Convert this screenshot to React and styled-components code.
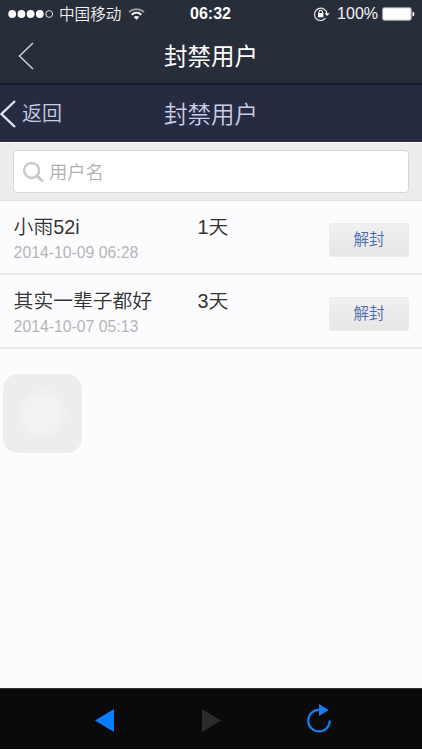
import React, {useState} from 'react';
import styled, {createGlobalStyle} from 'styled-components';

const GlobalStyle = createGlobalStyle`
    * { box-sizing: border-box; }
    body {
        margin: 0;background: #fff;
        font-family: "Liberation Sans", "Noto Sans CJK SC", sans-serif;
    }
`;

const Screen = styled.div`
    position: relative;display: flex;flex-direction: column;width: 422px;height: 749px;overflow: hidden;background: #fcfcfe;
`;

const StatusBar = styled.div`
    display: grid;grid-template-columns: 1fr auto 1fr;align-items: center;height: 28px;padding: 0 7px 0 8px;background: #282d3a;color: #f2f3f6;font-size: 16px;line-height: 28px;
    b{
        padding-right: 2px;color: #fff;
    }
`;

const Signal = styled.div`
    display: flex;align-items: center;height: 28px;
    span{
        margin: 0 7px 0 5px;padding-top: 1px;font-size: 15.6px;font-weight: 350;white-space: nowrap;
    }
`;

const Power = styled.div`
    display: flex;align-items: center;justify-content: flex-end;height: 28px;
    span{
        margin: 0 4px 0 6px;
    }
`;

const TitleBar = styled.header`
    display: grid;grid-template-columns: 1fr auto 1fr;align-items: center;
    height: ${({$sub}) => $sub ? '58px' : '57px'};
    background: ${({$sub}) => $sub ? '#272b41' : '#282d3a'};
    color: ${({$sub}) => $sub ? '#c9cee6' : '#fff'};
    border-bottom: ${({$sub}) => $sub ? '1px solid #fff' : '2px solid #141829'};
    h1{
        margin: 0;padding-top: 2px;font-size: 23.5px;line-height: 30px;
        font-weight: ${({$sub}) => $sub ? 350 : 400};
    }
`;

const BackLink = styled.a`
    display: flex;align-items: center;gap: 6px;font-size: 20px;font-weight: 350;line-height: 30px;cursor: pointer;
    padding-left: ${({$indent}) => $indent || 0}px;
`;

const SearchArea = styled.div`
    height: 58px;padding: 7px 13px 0;background: #ededef;border-bottom: 1px solid #e2e2e5;
`;

const SearchBox = styled.label`
    display: flex;align-items: center;width: 396px;height: 43px;padding-left: 9px;background: #fff;border: 1px solid #d6d6d8;border-radius: 4px;
    input{
        flex: 1;min-width: 0;height: 40px;margin-left: 4px;padding: 2px 0 0;border: 0;outline: 0;background: transparent;font-family: inherit;font-size: 18.3px;font-weight: 350;color: #333;
    }
    input::placeholder{
        color: #b0b0b0;opacity: 1;
    }
`;

const UserRow = styled.li`
    display: grid;grid-template-columns: 184px 1fr 80px;height: 74px;padding: 0 13px;border-bottom: 2px solid #e9e9ec;
`;

const UserList = styled.ul`
    flex: 1;margin: 0;padding: 0;list-style: none;
`;

const UserName = styled.div`
    padding: 12px 0 0 .6px;font-size: 19.8px;font-weight: 350;line-height: 28px;color: #333;white-space: nowrap;
    time{
        display: block;font-size: 15.8px;line-height: 23px;color: #b5b5b7;
    }
`;

const UnbanButton = styled.button`
    width: 80px;height: 34px;margin-top: 22px;padding: 0;border: 1px solid #ececef;border-radius: 2px;background: linear-gradient(#f0f0f1, #e7e7e8);color: #4c6bae;font-family: inherit;font-size: 15.5px;line-height: 28px;font-weight: 350;cursor: pointer;
`;

const AssistiveTouch = styled.div`
    position: absolute;left: 3px;top: 374px;width: 79px;height: 79px;border-radius: 15px;
    background: radial-gradient(circle at 50% 50%, #f4f4f5 0, #f2f2f3 17px, #ededee 27px);
`;

const Toolbar = styled.footer`
    display: grid;grid-template-columns: repeat(3, 107px);justify-content: center;height: 61px;background: #0a0a0a;border-top: 1px solid #343434;
`;

const ToolButton = styled.button`
    display: flex;align-items: center;justify-content: center;padding: 3px 0 0;border: 0;background: none;
    svg{
        display: block;overflow: visible;
    }
`;

const RefreshButton = styled(ToolButton)`
    padding: 0 0 1px 2px;
`;

const users = [
    {name: '小雨52i', time: '2014-10-09 06:28', days: '1天'},
    {name: '其实一辈子都好', time: '2014-10-07 05:13', days: '3天'},
];

const SignalDots = () => (
    <svg width="46" height="12" viewBox="0 0 46 12" fill="#fff">
        <circle cx="4.2" cy="6" r="3.9"/>
        <circle cx="13.4" cy="6" r="3.9"/>
        <circle cx="22.6" cy="6" r="3.9"/>
        <circle cx="31.8" cy="6" r="3.9"/>
        <circle cx="41.2" cy="6" r="3.4" fill="none" stroke="#dfe1e6"/>
    </svg>
);

const WifiIcon = () => (
    <svg width="17" height="12" viewBox="0 0 17 12" fill="none" strokeWidth="1.9">
        <path d="M1 4.1C5.2.2 11.8.2 16 4.1" stroke="#9297a0"/>
        <path d="M3.7 6.7C6.5 4.1 10.5 4.1 13.3 6.7" stroke="#fff"/>
        <path d="M5.8 9Q8.5 6.8 11.2 9L8.5 11.8Z" fill="#fff"/>
    </svg>
);

const LockIcon = () => (
    <svg width="17" height="14" viewBox="0 0 17 14" fill="none">
        <path d="M11.6 11.2A6.2 6.2 0 1 1 12.9 6.6" stroke="#e4e6eb" strokeWidth="1.2"/>
        <path d="M10.6 6.2h5L13.1 9Z" fill="#fff"/>
        <rect x="4" y="6.1" width="5.4" height="4.2" fill="#fff"/>
        <path d="M5 6.4V5a1.7 1.7 0 0 1 3.4 0v1.4" stroke="#fff" strokeWidth="1.1"/>
    </svg>
);

const BatteryIcon = () => (
    <svg width="33" height="14" viewBox="0 0 33 14">
        <rect x=".6" y=".8" width="28.6" height="12.4" rx="1.6" fill="#fff" stroke="#a1a4ab" strokeWidth="1.1"/>
        <path d="M30.5 4.5q2 .5 2 2.5t-2 2.5z" fill="#fff"/>
    </svg>
);

const Chevron = ({width, stroke}) => (
    <svg width="16" height="28" viewBox="0 0 16 28" fill="none">
        <path d="M15 1 1.5 14 15 27" stroke={stroke} strokeWidth={width}/>
    </svg>
);

const SearchIcon = () => (
    <svg width="22" height="22" viewBox="0 0 22 22" fill="none" stroke="#cbcbcd">
        <circle cx="8.6" cy="9.4" r="7.5" strokeWidth="2.5"/>
        <path d="m14 14.8 5.8 5.6" strokeWidth="3"/>
    </svg>
);

const App = () => {
    const [keyword, setKeyword] = useState('');

    return (
        <>
            <GlobalStyle/>
            <Screen>
                <StatusBar>
                    <Signal>
                        <SignalDots/>
                        <span>中国移动</span>
                        <WifiIcon/>
                    </Signal>
                    <b>06:32</b>
                    <Power>
                        <LockIcon/>
                        <span>100%</span>
                        <BatteryIcon/>
                    </Power>
                </StatusBar>
                <TitleBar>
                    <BackLink $indent={18}><Chevron width="1.5" stroke="#cdd1de"/></BackLink>
                    <h1>封禁用户</h1>
                </TitleBar>
                <TitleBar $sub>
                    <BackLink><Chevron width="2.3" stroke="#dfe4f8"/>返回</BackLink>
                    <h1>封禁用户</h1>
                </TitleBar>
                <SearchArea>
                    <SearchBox>
                        <SearchIcon/>
                        <input placeholder="用户名" value={keyword} onChange={e => setKeyword(e.target.value)}/>
                    </SearchBox>
                </SearchArea>
                <UserList>
                    {users.map(user => (
                        <UserRow key={user.name}>
                            <UserName>
                                {user.name}
                                <time>{user.time}</time>
                            </UserName>
                            <UserName>{user.days}</UserName>
                            <UnbanButton>解封</UnbanButton>
                        </UserRow>
                    ))}
                </UserList>
                <AssistiveTouch/>
                <Toolbar>
                    <ToolButton>
                        <svg width="19" height="23" viewBox="0 0 19 23"><path d="M0 11.5 19 0v23z" fill="#087dff"/></svg>
                    </ToolButton>
                    <ToolButton>
                        <svg width="19" height="23" viewBox="0 0 19 23"><path d="M19 11.5 0 0v23z" fill="#2c2c2c"/></svg>
                    </ToolButton>
                    <RefreshButton>
                        <svg width="24" height="29" viewBox="0 0 24 29">
                            <path d="M12 5.8A10.8 10.8 0 1 0 22.8 16.5" fill="none" stroke="#167fee" strokeWidth="2.2"/>
                            <path d="M12 0v12l9.7-6z" fill="#167fee"/>
                        </svg>
                    </RefreshButton>
                </Toolbar>
            </Screen>
        </>
    );
}

export default App;
